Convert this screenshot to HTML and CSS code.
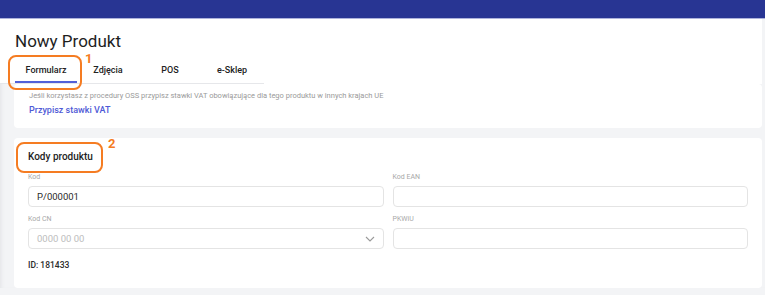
FILE: index.html
```html
<!DOCTYPE html>
<html lang="pl">
<head>
  <title>Nowy Produkt</title>
  <meta charset="UTF-8"/>
  <meta name="viewport" content="width=device-width,initial-scale=1"/>
  <link rel="stylesheet" href="styles.css">
</head>
<body>
<div class="topbar"></div>

<div class="page">
  <div class="header">
    <h1>Nowy Produkt</h1>
    <div class="tabs">
      <span class="tab active">Formularz</span>
      <span class="tab">Zdjęcia</span>
      <span class="tab">POS</span>
      <span class="tab">e-Sklep</span>
    </div>
  </div>

  <div class="card card-oss">
    <p class="hint">Jeśli korzystasz z procedury OSS przypisz stawki VAT obowiązujące dla tego produktu w innych krajach UE</p>
    <a class="link" href="#">Przypisz stawki VAT</a>
  </div>

  <div class="card card-codes">
    <h2>Kody produktu</h2>
    <div class="grid">
      <label class="field">Kod<span class="input">P/000001</span></label>
      <label class="field">Kod EAN<span class="input"></span></label>
      <label class="field">Kod CN
        <span class="input select placeholder">0000 00 00
          <svg width="10" height="6" viewBox="0 0 10 6"><path d="M1 1l4 4 4-4" fill="none" stroke="#9a9a9a" stroke-width="1.1"/></svg>
        </span>
      </label>
      <label class="field">PKWiU<span class="input"></span></label>
    </div>
    <div class="id">ID: 181433</div>
  </div>

  <!-- annotations -->
  <div class="mark mark-1"></div>
  <span class="mark-num num-1">1</span>
  <div class="mark mark-2"></div>
  <span class="mark-num num-2">2</span>
</div>
</body>
</html>
```

FILE: styles.css
```css
body {
  margin: 0;
  font-family: Roboto, "Liberation Sans", Arial, sans-serif;
  background: #f3f4f6;
  color: #222;
}

.topbar {
  height: 18px;
  background: #283593;
  border-bottom: 1px solid #aeb3dc;
}

.page {
  position: relative;
  padding-right: 3px;
  box-shadow: inset 4px 0 4px -3px #e2e3e6;
}

.header {
  background: #fff;
  padding-top: 12px;
}

h1 {
  margin: 0 0 0 15px;
  font-size: 17px;
  font-weight: 400;
  line-height: 20px;
  color: #1e1e1e;
}

.tabs {
  display: flex;
  width: 249px;
  padding-left: 15px;
  margin-top: 8px;
  border-bottom: 1px solid #e6e7ea;
}

.tab {
  width: 62px;
  text-align: center;
  font-size: 9px;
  font-weight: 500;
  line-height: 22px;
  height: 22px;
  border-bottom: 2px solid transparent;
  color: #222;
}

.tab.active {
  border-bottom-color: #5160d8;
}

.card {
  background: #fff;
  border-radius: 4px;
  margin-left: 14px;
  padding: 0 14px;
}

.card-oss {
  height: 44px;
  padding-left: 15px;
}

.hint {
  margin: 0;
  padding-top: 7px;
  font-size: 7.5px;
  line-height: 10px;
  color: #9a9a9a;
}

.link {
  display: block;
  margin-top: 4px;
  font-size: 9px;
  font-weight: 500;
  color: #4f5ad6;
  text-decoration: none;
}

.card-codes {
  margin-top: 10px;
  height: 150px;
}

h2 {
  margin: 0;
  padding-top: 13px;
  font-size: 10px;
  font-weight: 500;
  line-height: 12px;
  color: #1e1e1e;
}

.grid {
  display: grid;
  grid-template-columns: 1fr 1fr;
  column-gap: 9px;
  row-gap: 8px;
  margin-top: 10px;
}

.field {
  display: flex;
  flex-direction: column;
  font-size: 7px;
  line-height: 9px;
  color: #a8a8a8;
}

.input {
  display: flex;
  align-items: center;
  justify-content: space-between;
  box-sizing: border-box;
  height: 21px;
  margin-top: 4px;
  padding: 0 8px;
  border: 1px solid #e4e4e4;
  border-radius: 4px;
  font-size: 9.5px;
  color: #2a2a2a;
}

.placeholder {
  color: #bdbdbd;
}

.id {
  margin-top: 11px;
  font-size: 8.5px;
  font-weight: 500;
  color: #2a2a2a;
}

.mark {
  position: absolute;
  border: 2px solid #f57c22;
  border-radius: 8px;
}

.mark-1 {
  left: 8px;
  top: 36px;
  width: 70px;
  height: 31px;
}

.mark-2 {
  left: 16px;
  top: 123px;
  width: 83px;
  height: 27px;
}

.mark-num {
  position: absolute;
  font-size: 13px;
  font-weight: 700;
  line-height: 13px;
  color: #f57c22;
}

.num-1 {
  left: 85px;
  top: 33px;
}

.num-2 {
  left: 108px;
  top: 118px;
}
```
